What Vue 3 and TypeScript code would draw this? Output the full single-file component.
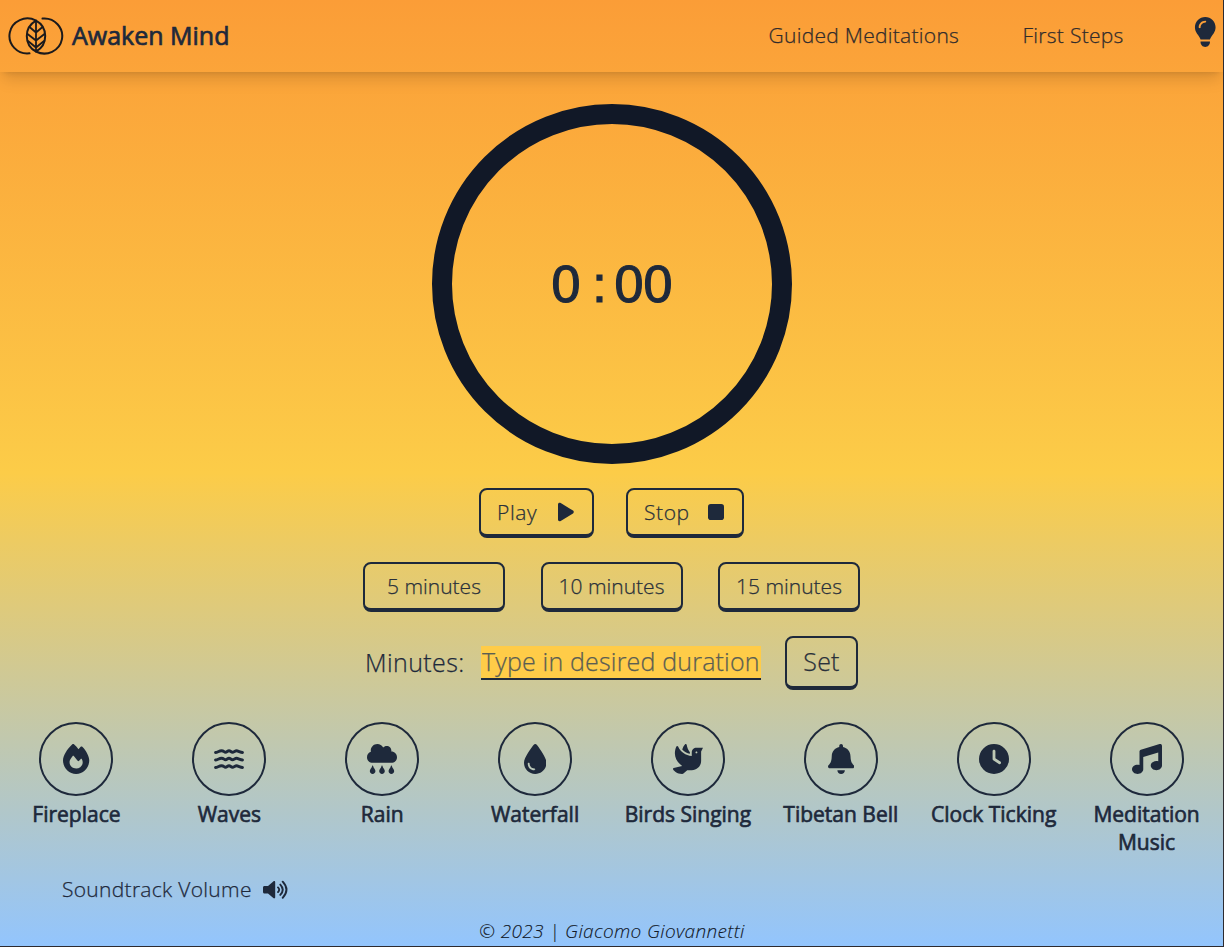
<script setup lang="ts">
interface Sound {
  name: string
  box: string
  w: number
  path?: string
  cls: string
}

const sounds: Sound[] = [
  { name: 'Fireplace', cls: 's-fire', box: '0 0 448 512', w: 26.25, path: 'M159.3 5.4c7.8-7.3 19.9-7.2 27.7 .1c27.6 25.9 53.5 53.8 77.7 84c11-14.4 23.5-30.1 37-42.9c7.9-7.4 20.1-7.4 28 .1c34.6 33 63.9 76.6 84.5 118c20.3 40.8 33.8 82.5 33.8 111.9C448 404.2 348.2 512 224 512C98.4 512 0 404.1 0 276.5c0-38.4 17.8-85.3 45.4-131.7C73.3 97.7 112.7 48.6 159.3 5.4zM225.7 416c25.3 0 47.7-7 68.8-21c42.1-29.4 53.4-88.2 28.1-134.4c-4.5-9-16-9.6-22.5-2l-25.2 29.3c-6.6 7.6-18.5 7.4-24.7-.5c-16.5-21-46-58.5-62.8-79.8c-6.3-8-18.3-8.1-24.7-.1c-33.8 42.5-50.8 69.3-50.8 99.4C112 375.4 162.6 416 225.7 416z' },
  { name: 'Waves', cls: 's-waves', box: '0 0 30 30', w: 30 },
  { name: 'Rain', cls: 's-rain', box: '0 0 512 512', w: 30, path: 'M416 128c-.6 0-1.1.2-1.6.2 1.1-5.2 1.6-10.6 1.6-16.2 0-44.2-35.8-80-80-80-24.6 0-46.3 11.3-61 28.8C256.4 24.8 219.3 0 176 0 114.1 0 64 50.1 64 112c0 7.3.8 14.3 2.1 21.2C27.8 145.8 0 181.5 0 224c0 53 43 96 96 96h320c53 0 96-43 96-96s-43-96-96-96zM88 374.2c-12.8 44.4-40 56.4-40 87.7 0 27.7 21.5 50.1 48 50.1s48-22.4 48-50.1c0-31.4-27.2-43.1-40-87.7-2.2-8.1-13.5-8.5-16 0zm160 0c-12.8 44.4-40 56.4-40 87.7 0 27.7 21.5 50.1 48 50.1s48-22.4 48-50.1c0-31.4-27.2-43.1-40-87.7-2.2-8.1-13.5-8.5-16 0zm160 0c-12.8 44.4-40 56.4-40 87.7 0 27.7 21.5 50.1 48 50.1s48-22.4 48-50.1c0-31.4-27.2-43.1-40-87.7-2.2-8.1-13.5-8.5-16 0z' },
  { name: 'Waterfall', cls: 's-water', box: '0 0 384 512', w: 22.5, path: 'M192 512C86 512 0 426 0 320C0 228.8 130.2 57.7 166.6 11.7C172.6 4.2 181.5 0 191.1 0h1.8c9.6 0 18.5 4.2 24.5 11.7C253.8 57.7 384 228.8 384 320c0 106-86 192-192 192zM96 336c0-8.8-7.2-16-16-16s-16 7.2-16 16c0 61.9 50.1 112 112 112c8.8 0 16-7.2 16-16s-7.2-16-16-16c-44.2 0-80-35.8-80-80z' },
  { name: 'Birds Singing', cls: 's-birds', box: '0 0 512 512', w: 30, path: 'M288 167.2v-28.1c-28.2-36.3-47.1-79.3-54.1-125.2-2.1-13.5-19-18.8-27.8-8.3-21.1 24.9-37.7 54.1-48.9 86.5 34.2 38.3 80 64.6 130.8 75.1zM400 64c-44.2 0-80 35.9-80 80.1v59.4C215.6 197.3 127 133 87 41.8c-5.5-12.5-23.2-13.2-29-.9C41.4 76 32 115.2 32 156.6c0 70.8 34.1 136.9 85.1 185.9 13.2 12.7 26.1 23.2 38.9 32.8l-143.9 36C1.4 414-3.4 426.4 2.6 435.7 20 462.6 63 508.2 155.8 512c8 .3 16-2.6 22.1-7.9l65.2-56.1H320c88.4 0 160-71.5 160-159.9V128l32-64H400zm0 96.1c-8.8 0-16-7.2-16-16s7.2-16 16-16 16 7.2 16 16-7.2 16-16 16z' },
  { name: 'Tibetan Bell', cls: 's-bell', box: '0 0 448 512', w: 26.25, path: 'M224 512c35.32 0 63.97-28.65 63.97-64H160.03c0 35.35 28.65 64 63.97 64zm215.39-149.71c-19.32-20.76-55.47-51.99-55.47-154.29 0-77.7-54.48-139.9-127.94-155.16V32c0-17.67-14.32-32-31.98-32s-31.98 14.33-31.98 32v20.84C118.56 68.1 64.08 130.3 64.08 208c0 102.3-36.15 133.53-55.47 154.29-6 6.45-8.66 14.16-8.61 21.71.11 16.4 12.98 32 32.1 32h383.8c19.12 0 32-15.6 32.1-32 .05-7.55-2.61-15.27-8.61-21.71z' },
  { name: 'Clock Ticking', cls: 's-clock', box: '0 0 512 512', w: 30, path: 'M256 0a256 256 0 1 1 0 512A256 256 0 1 1 256 0zM232 120V256c0 8 4 15.500 10.700 20l96 64c11 7.400 25.900 4.400 33.300-6.700s4.400-25.900-6.700-33.300L280 243.200V120c0-13.300-10.700-24-24-24s-24 10.700-24 24z' },
  { name: 'Meditation Music', cls: 's-music', box: '0 0 512 512', w: 30, path: 'M499.1 6.3c8.1 6 12.9 15.6 12.9 25.7v72V368c0 44.2-43 80-96 80s-96-35.8-96-80s43-80 96-80c11.2 0 22 1.6 32 4.6V147L192 223.8V432c0 44.2-43 80-96 80s-96-35.8-96-80s43-80 96-80c11.2 0 22 1.6 32 4.6V200 128c0-14.1 9.3-26.6 22.8-30.7l320-96c9.7-2.9 20.2-1.1 28.3 5z' },
]

const presets: number[] = [5, 10, 15]
</script>

<template>
  <div class="page">
    <header class="bar">
      <a class="brand">
        <svg class="logo" width="56" height="38" viewBox="0 0 56 38" fill="none" stroke="#1b1a1c" stroke-width="2" stroke-linecap="round">
          <path d="M21.500 36.300A17.900 17.500 0 1 1 28 3.600C34.500 7 37.200 12.500 37.200 19S34 31.200 28 34.500" />
          <path d="M34.500 1.600A17.900 17.500 0 1 1 28 34.500C21.500 31.200 18.800 25.500 18.800 19S22 7 28 3.600" />
          <path d="M28 4v30M21.500 10L28 15.500 34.500 10M19.500 17L28 23.500 36.500 17M20 24L28 30.500 36 24" stroke-width="1.800" />
        </svg>
        <span class="brand-name">Awaken Mind</span>
      </a>
      <nav class="nav">
        <a class="guided">Guided Meditations</a>
        <a class="steps">First Steps</a>
        <svg class="bulb" width="22.500" height="30" viewBox="0 0 384 512"><path d="M272 384c9.600-31.900 29.500-59.100 49.200-86.200c5.200-7.100 10.400-14.200 15.400-21.400c19.800-28.500 31.400-63 31.400-100.300C368 78.800 289.200 0 192 0S16 78.800 16 176c0 37.300 11.600 71.900 31.400 100.300c5 7.200 10.200 14.300 15.400 21.400c19.800 27.100 39.700 54.400 49.200 86.200H272zM192 512c44.200 0 80-35.800 80-80V416H112v16c0 44.200 35.800 80 80 80zM112 176c0 8.800-7.200 16-16 16s-16-7.200-16-16c0-61.900 50.100-112 112-112c8.800 0 16 7.200 16 16s-7.200 16-16 16c-44.200 0-80 35.800-80 80z" /></svg>
      </nav>
    </header>

    <main>
      <div class="dial">
        <span>0</span><span class="colon">:</span><span>00</span>
      </div>

      <div class="controls">
        <button class="btn play"><span>Play</span>
          <svg width="16" height="20" viewBox="0 0 16 20"><path d="M0 2.500C0 1 1.400.3 2.700 1.100L15 8.600C16 9.200 16 10.800 15 11.400L2.700 18.900C1.400 19.700 0 19 0 17.500z" /></svg>
        </button>
        <button class="btn stop"><span>Stop</span>
          <svg width="16" height="16" viewBox="0 0 16 16"><rect width="16" height="16" rx="2.800" /></svg>
        </button>
      </div>

      <div class="presets">
        <button v-for="m in presets" :key="m" class="btn preset">{{ m }} minutes</button>
      </div>

      <form class="duration" @submit.prevent>
        <label for="minutes">Minutes:</label>
        <input id="minutes" type="text" placeholder="Type in desired duration" />
        <button class="btn set">Set</button>
      </form>

      <section class="sounds">
        <div v-for="s in sounds" :key="s.name" class="sound" :class="s.cls">
          <div class="ring">
            <svg :width="s.w" height="30" :viewBox="s.box">
              <path v-if="s.path" :d="s.path" fill-rule="evenodd" />
              <g v-else fill="none" stroke="#1e293b" stroke-width="2.900" stroke-linecap="round" stroke-linejoin="round">
                <path v-for="y in [7.500, 15, 22.500]" :key="y" :d="`M1.500 ${y + 1}C3.500 ${y + 0.900} 5 ${y - 0.700} 7.500 ${y - 0.700}S10 ${y + 0.700} 11.500 ${y + 0.700}S13.500 ${y - 0.700} 15 ${y - 0.700}S17 ${y + 0.700} 18.500 ${y + 0.700}S21 ${y - 0.700} 22.500 ${y - 0.700}S26.500 ${y + 0.900} 28.500 ${y + 1}`" />
              </g>
            </svg>
          </div>
          <p>{{ s.name }}</p>
        </div>
      </section>

      <div class="volume">
        <span>Soundtrack Volume</span>
        <svg width="25" height="20" viewBox="0 0 25 20">
          <path d="M1.500 6H5L10.300 1.500C11.200.7 12.200 1.200 12.200 2.300V17.200C12.200 18.300 11.200 18.800 10.300 18L5 13.500H1.500C.6 13.500 0 12.900 0 12V7.500C0 6.600.6 6 1.500 6z" />
          <path d="M15 7.400Q17.400 9.750 15 12.100M17.300 4.600Q22.200 9.750 17.300 14.900M19.700 1.700Q27.200 9.750 19.700 17.800" fill="none" stroke="#1e293b" stroke-width="1.900" stroke-linecap="round" />
        </svg>
      </div>
    </main>

    <footer>© 2023 | Giacomo Giovannetti</footer>
  </div>
</template>

<style>
body {
  margin: 0;
}
</style>

<style scoped>
.page {
  box-sizing: border-box;
  height: 947px;
  overflow: hidden;
  display: flex;
  flex-direction: column;
  border-right: 1px solid #2d2b30;
  border-bottom: 1px solid #2d2b30;
  background: linear-gradient(180deg, #fb9d37 0%, #fccc48 50%, #93c5fd 100%);
  color: #1e293b;
  font-family: "Open Sans", "Noto Sans", sans-serif;
  font-weight: 300;
  font-size: 21px;
  -webkit-text-stroke: 0.25px currentColor;
}
svg {
  display: block;
  flex: none;
  fill: #1e293b;
}
.logo {
  fill: none;
}
.bar {
  height: 72px;
  flex: none;
  box-sizing: border-box;
  padding: 0 8px;
  display: flex;
  align-items: center;
  justify-content: space-between;
  box-shadow: 0 10px 15px -3px rgba(0, 0, 0, 0.13), 0 4px 6px -4px rgba(0, 0, 0, 0.13);
}
.brand {
  display: flex;
  align-items: center;
  gap: 8px;
}
.brand-name {
  font-size: 25px;
  font-weight: 400;
  -webkit-text-stroke: 0.7px currentColor;
  margin-top: -3px;
  white-space: nowrap;
}
.nav {
  display: flex;
  align-items: center;
  color: #302b2b;
}
.guided,
.steps {
  margin-top: -2px;
  letter-spacing: 0.28px;
  white-space: nowrap;
}
.guided {
  width: 190px;
  margin-right: 64px;
}
.steps {
  width: 101px;
  margin-right: 70px;
}
.bulb {
  margin: -8px -1px 0 0;
}
main {
  display: flex;
  flex-direction: column;
  align-items: center;
}
.dial {
  box-sizing: border-box;
  width: 360px;
  height: 360px;
  margin: 32px 0 24px 1px;
  border: 20px solid #111827;
  border-radius: 50%;
  display: flex;
  align-items: center;
  justify-content: center;
  font: 400 52px/60px "Liberation Sans", Arial, sans-serif;
  -webkit-text-stroke: 1.2px #1e293b;
}
.colon {
  width: 34px;
  text-align: center;
  padding-left: 4px;
  box-sizing: border-box;
}
.controls {
  display: flex;
  gap: 32px;
  margin-bottom: 24px;
}
.btn {
  box-sizing: border-box;
  height: 50px;
  display: flex;
  align-items: center;
  justify-content: center;
  padding: 0 16px 1px;
  border: 2px solid #1e293b;
  border-bottom-width: 4px;
  border-radius: 8px;
  background: transparent;
  color: #29303a;
  font: inherit;
  white-space: nowrap;
}
.play,
.stop {
  justify-content: space-between;
  padding-right: 18px;
  letter-spacing: 0.6px;
}
.play {
  width: 115px;
}
.stop {
  width: 118px;
}
.presets {
  display: flex;
  gap: 35.500px;
  margin-bottom: 24px;
}
.preset {
  width: 142px;
}
.duration {
  display: flex;
  align-items: center;
  height: 54px;
  margin-bottom: 32px;
  font-size: 25px;
}
.duration label {
  width: 100px;
  margin: -3px 16px 0 0;
  letter-spacing: 0.4px;
  white-space: nowrap;
}
.duration input {
  box-sizing: border-box;
  width: 280px;
  height: 34px;
  margin-right: 24px;
  padding: 0 1px 3px;
  border: 0;
  border-bottom: 2px solid #1e293b;
  background: #ffcc48;
  font: inherit;
  letter-spacing: 0.18px;
  outline: none;
}
.duration input::placeholder {
  color: #5b5e53;
  opacity: 1;
}
.set {
  width: 73px;
  height: 54px;
  padding-bottom: 3px;
  letter-spacing: 0.2px;
}
.sounds {
  width: 1223px;
  display: grid;
  grid-template-columns: repeat(8, 1fr);
}
.sound {
  display: flex;
  flex-direction: column;
  align-items: center;
}
.ring {
  box-sizing: border-box;
  width: 74px;
  height: 74px;
  border: 2px solid #1e293b;
  border-radius: 50%;
  display: flex;
  align-items: center;
  justify-content: center;
}
.sound p {
  margin: 4px 0 0;
  font-weight: 400;
  -webkit-text-stroke: 0.65px currentColor;
  line-height: 28px;
  text-align: center;
  max-width: 135px;
}
.volume {
  align-self: flex-start;
  display: flex;
  align-items: center;
  height: 28px;
  margin: 20px 0 0 62px;
  white-space: nowrap;
}
.volume span {
  width: 201px;
  margin-top: -2px;
  letter-spacing: 0.3px;
}
footer {
  text-align: center;
  margin-top: 15px;
  padding-left: 1px;
  line-height: 24px;
  font-size: 19px;
  font-style: italic;
  letter-spacing: 0.35px;
  color: #111827;
  -webkit-text-stroke-width: 0.1px;
}
</style>
